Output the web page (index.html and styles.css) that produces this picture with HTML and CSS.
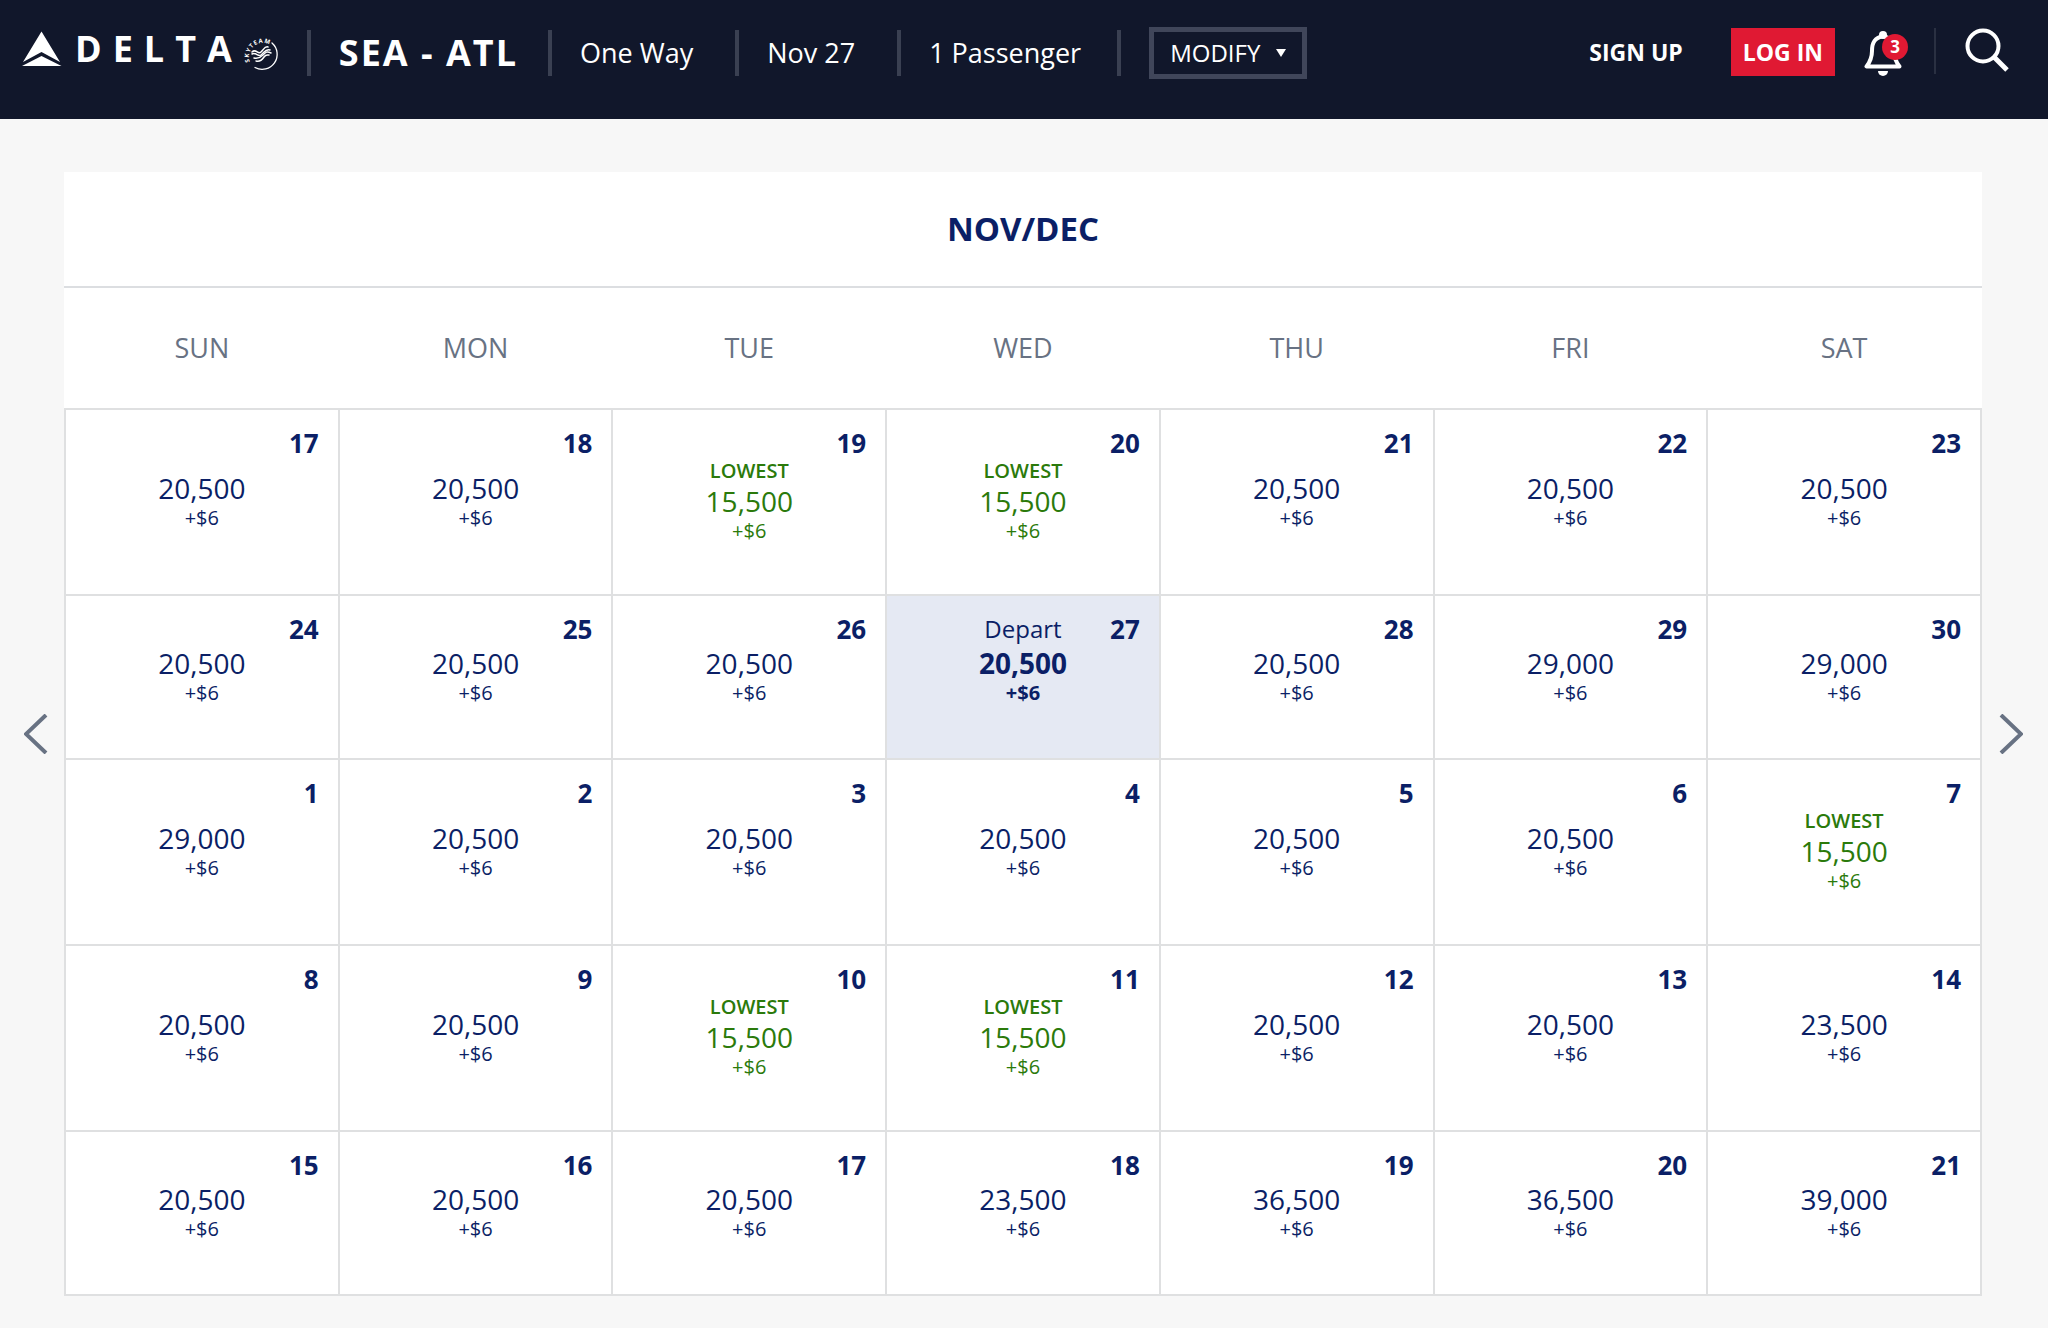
FILE: index.html
```html
<!DOCTYPE html>
<html lang="en">
<head>
  <meta charset="UTF-8" />
  <meta name="viewport" content="width=device-width, initial-scale=1.0" />
  <title>Delta - Flexible Dates</title>
  <link rel="stylesheet" href="styles.css">
</head>
<body>
  <header class="topbar">
    <a class="logo" href="#" aria-label="Delta home">
      <svg class="logo-mark" width="40" height="36" viewBox="0 0 40 36" fill="#fff" aria-hidden="true">
        <path d="M19.500 0.500L38 31L19.500 21L1 31Z" />
        <path d="M19.500 25L39.500 35H0Z" />
      </svg>
      <span class="logo-name">DELTA</span>
      <svg class="skyteam" width="36" height="36" viewBox="0 0 36 36" aria-hidden="true">
        <defs><path id="skyArc" d="M7 27A14 14 0 0 1 30 12" /></defs>
        <text class="skyteam-text"><textPath href="#skyArc">SKYTEAM</textPath></text>
        <g fill="none" stroke="#fff" stroke-linecap="round">
          <path d="M29 8A15 15 0 0 1 12 32.500" stroke-width="1.300" />
          <path d="M9 17C13 13 15 20 18 17S22 11 25 12" stroke-width="1.500" />
          <path d="M9 19C13 17 15 22 18 20S23 13 27 15" stroke-width="1.500" />
          <path d="M11 23C15 24 17 23 20 20S24 16 28 18" stroke-width="1.500" />
          <path d="M13 26C17 27 19 25 21 22S24 20 26 20" stroke-width="1.500" />
        </g>
      </svg>
    </a>
    <div class="trip">
      <span class="route">SEA - ATL</span>
      <span class="trip-type">One Way</span>
      <span class="trip-date">Nov 27</span>
      <span class="trip-pax">1 Passenger</span>
      <div class="trip-modify"><button class="modify">MODIFY <i class="caret"></i></button></div>
    </div>
    <div class="account">
      <a class="signup" href="#">SIGN UP</a>
      <button class="login">LOG IN</button>
      <button class="bell" aria-label="Notifications">
        <svg width="38" height="48" viewBox="0 0 38 48" aria-hidden="true">
          <path d="M19 6C11 8 8 12 8 21C8 28 6 32 2.500 36.500H35.500C32 32 30 28 30 21C30 12 27 8 19 6Z" fill="none" stroke="#fff" stroke-width="4" stroke-linejoin="round" />
          <circle cx="19" cy="5" r="4" fill="#fff" />
          <path d="M14 41H24A5 5 0 0 1 14 41Z" fill="#fff" />
        </svg>
        <span class="badge">3</span>
      </button>
      <button class="search" aria-label="Search">
        <svg width="46" height="46" viewBox="0 1 46 46" fill="none" stroke="#fff" aria-hidden="true">
          <circle cx="19" cy="19" r="15.500" stroke-width="4" />
          <path d="M30 30L43 43" stroke-width="5" />
        </svg>
      </button>
    </div>
  </header>

  <main class="calendar-wrap">
    <button class="arrow" aria-label="Previous dates">
      <svg width="24" height="40" viewBox="0 0 24 40" aria-hidden="true"><path d="M22 1L2 20L22 39" /></svg>
    </button>
    <section class="calendar">
      <h2>NOV/DEC</h2>
      <table>
        <thead>
          <tr><th>SUN</th><th>MON</th><th>TUE</th><th>WED</th><th>THU</th><th>FRI</th><th>SAT</th></tr>
        </thead>
        <tbody>
          <tr class="tall">
            <td><div class="head"><b>17</b></div><div class="fare">20,500 <small>+$6</small></div></td>
            <td><div class="head"><b>18</b></div><div class="fare">20,500 <small>+$6</small></div></td>
            <td class="lowest"><div class="head"><b>19</b></div><div class="fare"><span>LOWEST</span> 15,500 <small>+$6</small></div></td>
            <td class="lowest"><div class="head"><b>20</b></div><div class="fare"><span>LOWEST</span> 15,500 <small>+$6</small></div></td>
            <td><div class="head"><b>21</b></div><div class="fare">20,500 <small>+$6</small></div></td>
            <td><div class="head"><b>22</b></div><div class="fare">20,500 <small>+$6</small></div></td>
            <td><div class="head"><b>23</b></div><div class="fare">20,500 <small>+$6</small></div></td>
          </tr>
          <tr>
            <td><div class="head"><b>24</b></div><div class="fare">20,500 <small>+$6</small></div></td>
            <td><div class="head"><b>25</b></div><div class="fare">20,500 <small>+$6</small></div></td>
            <td><div class="head"><b>26</b></div><div class="fare">20,500 <small>+$6</small></div></td>
            <td class="selected"><div class="head"><span>Depart</span><b>27</b></div><div class="fare">20,500 <small>+$6</small></div></td>
            <td><div class="head"><b>28</b></div><div class="fare">20,500 <small>+$6</small></div></td>
            <td><div class="head"><b>29</b></div><div class="fare">29,000 <small>+$6</small></div></td>
            <td><div class="head"><b>30</b></div><div class="fare">29,000 <small>+$6</small></div></td>
          </tr>
          <tr class="tall">
            <td><div class="head"><b>1</b></div><div class="fare">29,000 <small>+$6</small></div></td>
            <td><div class="head"><b>2</b></div><div class="fare">20,500 <small>+$6</small></div></td>
            <td><div class="head"><b>3</b></div><div class="fare">20,500 <small>+$6</small></div></td>
            <td><div class="head"><b>4</b></div><div class="fare">20,500 <small>+$6</small></div></td>
            <td><div class="head"><b>5</b></div><div class="fare">20,500 <small>+$6</small></div></td>
            <td><div class="head"><b>6</b></div><div class="fare">20,500 <small>+$6</small></div></td>
            <td class="lowest"><div class="head"><b>7</b></div><div class="fare"><span>LOWEST</span> 15,500 <small>+$6</small></div></td>
          </tr>
          <tr class="tall">
            <td><div class="head"><b>8</b></div><div class="fare">20,500 <small>+$6</small></div></td>
            <td><div class="head"><b>9</b></div><div class="fare">20,500 <small>+$6</small></div></td>
            <td class="lowest"><div class="head"><b>10</b></div><div class="fare"><span>LOWEST</span> 15,500 <small>+$6</small></div></td>
            <td class="lowest"><div class="head"><b>11</b></div><div class="fare"><span>LOWEST</span> 15,500 <small>+$6</small></div></td>
            <td><div class="head"><b>12</b></div><div class="fare">20,500 <small>+$6</small></div></td>
            <td><div class="head"><b>13</b></div><div class="fare">20,500 <small>+$6</small></div></td>
            <td><div class="head"><b>14</b></div><div class="fare">23,500 <small>+$6</small></div></td>
          </tr>
          <tr>
            <td><div class="head"><b>15</b></div><div class="fare">20,500 <small>+$6</small></div></td>
            <td><div class="head"><b>16</b></div><div class="fare">20,500 <small>+$6</small></div></td>
            <td><div class="head"><b>17</b></div><div class="fare">20,500 <small>+$6</small></div></td>
            <td><div class="head"><b>18</b></div><div class="fare">23,500 <small>+$6</small></div></td>
            <td><div class="head"><b>19</b></div><div class="fare">36,500 <small>+$6</small></div></td>
            <td><div class="head"><b>20</b></div><div class="fare">36,500 <small>+$6</small></div></td>
            <td><div class="head"><b>21</b></div><div class="fare">39,000 <small>+$6</small></div></td>
          </tr>
        </tbody>
      </table>
    </section>
    <button class="arrow" aria-label="Next dates">
      <svg width="24" height="40" viewBox="0 0 24 40" aria-hidden="true"><path d="M2 1L22 20L2 39" /></svg>
    </button>
  </main>
</body>
</html>
```
FILE: styles.css
```css
* {
  margin: 0; padding: 0; box-sizing: border-box;
  font-family: 'Open Sans', 'Noto Sans', sans-serif;
}
body {
  background: #f7f7f7; color: #0b1f66;
}
button {
  background: none; border: none; cursor: pointer;
}
a {
  color: inherit; text-decoration: none;
}
svg {
  display: block;
}

/* top bar */
.topbar {
  background: #11172b; color: #fff;
  display: flex; align-items: flex-start;
  padding: 26px 38px 40px 22px;
}
.logo {
  display: flex; align-items: center;
  height: 46px;
}
.logo-name {
  font-size: 36px; line-height: 46px; font-weight: 700;
  letter-spacing: 11px; margin-left: 13px;
}
.skyteam {
  margin-top: 8px;
}
.skyteam-text {
  font-size: 6px; font-weight: 700; fill: #fff;
  letter-spacing: 1px;
}
.trip {
  display: flex; align-items: center;
  height: 53px; margin-left: 28px;
  font-size: 27px; white-space: nowrap;
}
.trip > * {
  border-left: 4px solid #3a4052;
  height: 46px; line-height: 46px;
  padding: 0 42px 0 28px;
  display: flex; align-items: center;
}
.trip .route {
  font-size: 36px; font-weight: 700;
  letter-spacing: 2px; padding-right: 30px;
}
.trip .trip-pax {
  padding-right: 36px;
}
.trip .trip-modify {
  padding-right: 0;
}
.modify {
  display: flex; align-items: center; gap: 16px;
  height: 52px; padding: 0 16px;
  border: 5px solid #40465a;
  color: #fff; font-size: 24px; flex-shrink: 0;
}
.caret {
  border: 5px solid transparent; border-top: 8px solid #fff;
  border-bottom: 0;
}
.account {
  display: flex; align-items: flex-start;
  margin-left: auto; padding-top: 2px;
}
.signup, .login {
  font-size: 23px; line-height: 48px; font-weight: 700;
  white-space: nowrap;
}
.login {
  background: #e01933; color: #fff;
  padding: 0 12px; margin-left: 48px;
}
.bell {
  position: relative;
  padding: 2px 32px 0 0; margin-left: 29px;
  border-right: 2px solid #2a3042; height: 46px;
}
.badge {
  position: absolute; top: 6px; left: 18px;
  width: 26px; height: 26px; border-radius: 50%;
  background: #e01933; color: #fff;
  font-size: 17px; line-height: 26px; font-weight: 700;
  text-align: center;
}
.search {
  margin-left: 28px;
}

/* calendar */
.calendar-wrap {
  display: flex; align-items: center;
  padding: 53px 0 34px;
}
.arrow {
  width: 64px; flex-shrink: 0;
  display: flex; justify-content: center;
  padding-left: 8px;
}
.arrow:last-child {
  width: 66px; padding: 0 8px 0 0;
}
.arrow path {
  fill: none; stroke: #687283; stroke-width: 4;
}
.calendar {
  flex: 1; background: #fff;
}
.calendar h2 {
  font-size: 33px; line-height: 114px; font-weight: 700;
  text-align: center; border-bottom: 2px solid #dcdee1;
}
table {
  width: 100%; table-layout: fixed;
  border-collapse: collapse;
}
th {
  font-size: 27px; line-height: 120px; font-weight: 400;
  color: #687283;
}
td {
  border: 2px solid #dfe0e1;
  padding: 19px 19px 51px; vertical-align: top;
}
.tall td {
  padding-bottom: 49px;
}
.head {
  display: grid; grid-template-columns: 1fr auto 1fr;
  line-height: 28px; font-size: 24px;
}
.head span {
  grid-column: 2;
}
.head b {
  grid-column: 3; text-align: right;
  font-size: 26px;
}
.fare {
  padding-top: 4px; text-align: center;
  font-size: 28px; line-height: 32px;
}
.fare span, .fare small {
  display: block; font-size: 20px; line-height: 28px;
}
.fare span {
  font-weight: 600;
}
.tall .fare {
  padding-top: 15px;
}
.tall .lowest .fare {
  padding-top: 0; color: #2b7a0b;
}
.selected {
  background: #e5e9f3;
}
.selected .fare {
  font-weight: 700;
}
```
